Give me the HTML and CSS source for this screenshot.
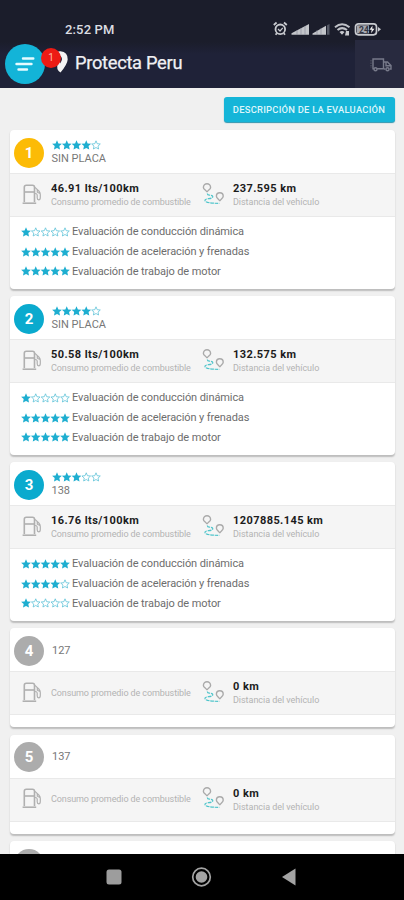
FILE: index.html
```html
<!DOCTYPE html>
<html lang="es">
<head>
<meta charset="utf-8">
<title>Protecta Peru</title>
<link rel="stylesheet" href="styles.css">
</head>
<body>
<svg class="defs" width="0" height="0">
  <symbol id="full" viewBox="0 0 10 10"><path fill="#1eaed0" d="M5 .2 6.4 3.4 9.9 3.8 7.3 6.1 8 9.6 5 7.9 2 9.6 2.7 6.1 .1 3.8 3.6 3.4Z"/></symbol>
  <symbol id="empty" viewBox="0 0 10 10"><path fill="none" stroke="#55bfd6" stroke-width=".75" d="M5 .8 6.2 3.7 9.3 4 7 6.1 7.6 9 5 7.5 2.4 9 3 6.1 .7 4 3.8 3.7Z"/></symbol>
  <symbol id="s1" viewBox="0 0 49 10"><use href="#full" width="10" height="10"/><use href="#empty" x="9.75" width="10" height="10"/><use href="#empty" x="19.5" width="10" height="10"/><use href="#empty" x="29.25" width="10" height="10"/><use href="#empty" x="39" width="10" height="10"/></symbol>
  <symbol id="s3" viewBox="0 0 49 10"><use href="#full" width="10" height="10"/><use href="#full" x="9.75" width="10" height="10"/><use href="#full" x="19.5" width="10" height="10"/><use href="#empty" x="29.25" width="10" height="10"/><use href="#empty" x="39" width="10" height="10"/></symbol>
  <symbol id="s4" viewBox="0 0 49 10"><use href="#full" width="10" height="10"/><use href="#full" x="9.75" width="10" height="10"/><use href="#full" x="19.5" width="10" height="10"/><use href="#full" x="29.25" width="10" height="10"/><use href="#empty" x="39" width="10" height="10"/></symbol>
  <symbol id="s5" viewBox="0 0 49 10"><use href="#full" width="10" height="10"/><use href="#full" x="9.75" width="10" height="10"/><use href="#full" x="19.5" width="10" height="10"/><use href="#full" x="29.25" width="10" height="10"/><use href="#full" x="39" width="10" height="10"/></symbol>
  <symbol id="fuel" viewBox="0 0 20 21"><g fill="none" stroke="#b0b0b0" stroke-width="1.6"><path d="M2.3 18V3.2Q2.3 1.2 4.3 1.2H10.5Q12.5 1.2 12.5 3.2V18"/><path d="M.6 19.2H14.2"/><path d="M3 8H12"/><path d="M13 3.4 17 7.2Q18.3 8.6 18.3 10.5V13.5Q18.3 15.8 16.7 15.8 15.2 15.8 15.2 13.8V11Q15.2 9.6 13 9.5M15.3 5.8V8.2L18 9.5" stroke-width="1.2"/></g></symbol>
  <symbol id="route" viewBox="0 0 22 22"><g fill="none" stroke="#aaa" stroke-width="1.4"><path d="M5 9.2C4.6 7.3 1.4 6.4 1.4 4.4A3.6 3.6 0 0 1 8.6 4.4C8.6 6.4 5.4 7.3 5 9.2Z"/><path d="M17.8 18.2C17.4 16.2 14.4 15.4 14.4 13.2A3.4 3.4 0 0 1 21.2 13.2C21.2 15.4 18.2 16.2 17.8 18.2Z"/></g><path d="M5.3 10.4Q5.3 12 7.5 12.2 11.2 12.5 10.7 14 10.3 15.3 6.5 15.7 2 16.3 3.2 18 5 20.3 17.4 20.4" fill="none" stroke="#50c5cb" stroke-width="1.2" stroke-dasharray="3.6 .8"/></symbol>
</svg>
<div class="screen">
  <header class="top">
    <div class="status">
      <span class="time">2:52 PM</span>
      <svg class="sys" width="110" height="16" viewBox="0 0 110 16">
        <g fill="none" stroke="#c9cbd0" stroke-width="1.8"><circle cx="7.3" cy="8.3" r="4.8"/><path d="M.8 4 3.6 1.5M11 1.5 13.8 4M3.8 12.3 2.6 13.8M10.8 12.3 12 13.8"/><path d="M5 8 7 10 9.8 6.8" stroke-width="1.2"/></g>
        <g fill="#c3c5ca"><path d="M18.5 13.8V12.3L36 3V13.8Z"/><path d="M39.5 13.8V12.5L53 4.8V13.8Z"/><path fill="#555966" d="M54 13.8V4.3L56.5 3V13.8Z"/></g>
        <path d="M24 9V14M28 7V14M32 5V14M44 9V14M48 7V14" stroke="#858893" stroke-width=".6"/>
        <g fill="none" stroke="#bfc1c7" stroke-width="2"><path d="M62 6.2Q69 .4 76.5 6.2M64.5 9Q69 5.3 74 9"/></g><path d="M66.5 11Q69 9 71.5 11L69 13.8ZM73 10H76V14.5H72Z" fill="#c9cbd0"/>
        <rect x="82.5" y="2.8" width="21" height="11" rx="3" fill="#1b1c2b" stroke="#c9cbd0" stroke-width="1.7"/><path d="M84 4.3H96V12.3H84Z" fill="#a6a8af"/><path d="M105 6 108 8.3 105 10.8Z" fill="#c9cbd0"/><text x="86" y="11.5" class="bat">24</text><path d="M99.5 4.5 96.5 8.7H98.7L98 12.2 101.5 7.8H99.3Z" fill="#eee"/>
      </svg>
    </div>
    <div class="bar">
      <div class="menu">
        <svg width="22" height="18" viewBox="0 0 22 18"><path d="M9 3.5H19.3M2.5 9H17.5M4.5 14.5H13" stroke="#e6fbff" stroke-width="2.4" stroke-linecap="round"/></svg>
        <span class="badge">1</span>
      </div>
      <svg class="pin" width="18" height="24" viewBox="0 0 18 24"><path d="M2 4Q5 1 9.5 1.2 17 2 16.7 9.5 16.3 14.5 9.500 22.500 4.500 19.500 7 13Z" fill="#f4f4f4"/><path d="M9 5.500Q13 8.500 9 13.500Z" fill="#1f2238"/></svg>
      <h1>Protecta Peru</h1>
      <div class="truck">
        <svg width="23" height="16" viewBox="0 0 23 16"><g fill="none" stroke="#777a8a" stroke-width="1.4"><path d="M4 11.800H3V2H13.500V11.800H7M14 5H17.500L21 8.600V12H19.500M14 12H15.500M16 5.500V8.700H20.500"/><circle cx="5.500" cy="12.200" r="1.500"/><circle cx="17.500" cy="12.200" r="1.500"/></g><path d="M1 3V11" stroke="#555868" stroke-dasharray="1.500 1"/></svg>
      </div>
    </div>
  </header>
  <main>
    <div class="action"><button>DESCRIPCIÓN DE LA EVALUACIÓN</button></div>
    <article class="card">
      <div class="head"><b class="rank gold">1</b><div><svg class="stars"><use href="#s4"/></svg><p>SIN PLACA</p></div></div>
      <div class="stats"><svg class="fuel"><use href="#fuel"/></svg><div class="stat"><strong>46.91 lts/100km</strong><small>Consumo promedio de combustible</small></div><svg class="route"><use href="#route"/></svg><div class="stat dist"><strong>237.595 km</strong><small>Distancia del vehículo</small></div></div>
      <ul>
        <li><svg class="stars"><use href="#s1"/></svg><span>Evaluación de conducción dinámica</span></li>
        <li><svg class="stars"><use href="#s5"/></svg><span>Evaluación de aceleración y frenadas</span></li>
        <li><svg class="stars"><use href="#s5"/></svg><span>Evaluación de trabajo de motor</span></li>
      </ul>
    </article>
    <article class="card">
      <div class="head"><b class="rank">2</b><div><svg class="stars"><use href="#s4"/></svg><p>SIN PLACA</p></div></div>
      <div class="stats"><svg class="fuel"><use href="#fuel"/></svg><div class="stat"><strong>50.58 lts/100km</strong><small>Consumo promedio de combustible</small></div><svg class="route"><use href="#route"/></svg><div class="stat dist"><strong>132.575 km</strong><small>Distancia del vehículo</small></div></div>
      <ul>
        <li><svg class="stars"><use href="#s1"/></svg><span>Evaluación de conducción dinámica</span></li>
        <li><svg class="stars"><use href="#s5"/></svg><span>Evaluación de aceleración y frenadas</span></li>
        <li><svg class="stars"><use href="#s5"/></svg><span>Evaluación de trabajo de motor</span></li>
      </ul>
    </article>
    <article class="card">
      <div class="head"><b class="rank">3</b><div><svg class="stars"><use href="#s3"/></svg><p>138</p></div></div>
      <div class="stats"><svg class="fuel"><use href="#fuel"/></svg><div class="stat"><strong>16.76 lts/100km</strong><small>Consumo promedio de combustible</small></div><svg class="route"><use href="#route"/></svg><div class="stat dist"><strong>1207885.145 km</strong><small>Distancia del vehículo</small></div></div>
      <ul>
        <li><svg class="stars"><use href="#s5"/></svg><span>Evaluación de conducción dinámica</span></li>
        <li><svg class="stars"><use href="#s4"/></svg><span>Evaluación de aceleración y frenadas</span></li>
        <li><svg class="stars"><use href="#s1"/></svg><span>Evaluación de trabajo de motor</span></li>
      </ul>
    </article>
    <article class="card short">
      <div class="head"><b class="rank gray">4</b><div><p>127</p></div></div>
      <div class="stats"><svg class="fuel"><use href="#fuel"/></svg><div class="stat"><small>Consumo promedio de combustible</small></div><svg class="route"><use href="#route"/></svg><div class="stat dist"><strong>0 km</strong><small>Distancia del vehículo</small></div></div>
    </article>
    <article class="card short">
      <div class="head"><b class="rank gray">5</b><div><p>137</p></div></div>
      <div class="stats"><svg class="fuel"><use href="#fuel"/></svg><div class="stat"><small>Consumo promedio de combustible</small></div><svg class="route"><use href="#route"/></svg><div class="stat dist"><strong>0 km</strong><small>Distancia del vehículo</small></div></div>
    </article>
    <article class="card short">
      <div class="head"><b class="rank gray"></b></div>
    </article>
  </main>
  <nav>
    <svg width="404" height="46" viewBox="0 0 404 46"><rect x="106.5" y="15.5" width="15" height="15" rx="2.5" fill="#9d9d9d"/><circle cx="201.5" cy="23" r="8.8" fill="none" stroke="#a3a3a3" stroke-width="1.7"/><circle cx="201.5" cy="23" r="5.8" fill="#a3a3a3"/><path d="M282 23 295.5 14.5V31.5Z" fill="#a3a3a3"/></svg>
  </nav>
</div>
</body>
</html>
```
FILE: styles.css
```css
* { box-sizing: border-box; }
body { margin: 0; font-family: Roboto, "Liberation Sans", sans-serif; background: #000; }
p, h1, ul { margin: 0; padding: 0; list-style: none; }
svg { display: block; flex: none; }
.defs { position: absolute; }
.screen { width: 404px; height: 900px; display: flex; flex-direction: column; overflow: hidden; }
.top { height: 88px; flex: none; background: linear-gradient(#1b1d2b 0, #1b1d2b 42px, #1f2238 54px, #1f2238 100%); }
.status { height: 40px; display: flex; justify-content: space-between; padding: 21px 21px 0 65px; }
.time { font-size: 13px; line-height: 17px; font-weight: 500; letter-spacing: .15px; color: #dcdde2; }
.bat { font-size: 8.5px; font-weight: 700; fill: #343744; }
.bar { height: 48px; display: flex; align-items: center; padding-left: 5px; }
.menu { width: 40px; height: 40px; border-radius: 50%; background: #13b4d8; display: flex; align-items: center; justify-content: center; position: relative; z-index: 1; margin-top: -1px; }
.badge { position: absolute; left: 36px; top: 4px; width: 20px; height: 20px; border-radius: 50%; background: #ed1b14; color: #ffb9a9; font-size: 10px; line-height: 20px; text-align: center; }
.pin { margin: -4px 0 0 6px; }
h1 { margin: -3px 0 0 6px; font-size: 18.3px; line-height: 24px; font-weight: 400; letter-spacing: -.3px; color: #f0f0f4; -webkit-text-stroke: .25px #f0f0f4; }
.truck { margin-left: auto; width: 49px; height: 48px; background: #282a3f; display: flex; align-items: center; padding: 2px 0 0 15px; }
main { flex: 1; min-height: 0; overflow: hidden; background: #f0f0f0; padding: 9px 9.5px 0 10px; display: flex; flex-direction: column; gap: 7.5px; }
.action { display: flex; justify-content: flex-end; height: 25.5px; flex: none; }
button { width: 171px; height: 25px; padding: 0; border: 0; border-radius: 3px; background: #15b5d8; color: #dff6fb; font: 500 9.4px/25px Roboto, sans-serif; letter-spacing: .24px; box-shadow: 0 1px 1px #2b94ae; white-space: nowrap; }
.card { flex: none; height: 158.5px; background: #fff; border-radius: 4px; box-shadow: 0 1.5px 1.5px #bdbdbd; }
.card.short { height: 99px; }
.head { height: 43px; display: flex; align-items: center; padding: 2px 0 0 4px; gap: 8px; }
.rank { width: 30px; height: 30px; border-radius: 50%; background: #0aaace; color: #fff; font-size: 15px; line-height: 30px; font-weight: 700; text-align: center; }
.gold { background: #fcbb06; }
.gray { background: #acacac; }
.head p { font-size: 11px; line-height: 14px; color: #777; }
.head .stars + p { margin: 2px 0 0 -.5px; }
.stars { width: 49px; height: 10px; }
.stats { height: 44px; background: #f5f5f5; border: solid #e9e9e9; border-width: 1px 0; display: flex; align-items: center; padding-left: 12px; }
.fuel { width: 20px; height: 21px; margin-top: -2px; }
.stat { width: 160px; padding-left: 9px; white-space: nowrap; }
.stat strong { display: block; font-size: 11px; line-height: 15px; font-weight: 700; letter-spacing: .42px; color: #1c1c1c; }
.stat small { display: block; font-size: 9px; line-height: 13px; letter-spacing: -.1px; color: #b3b3b3; }
.dist small { letter-spacing: -.04px; }
.route { width: 22px; height: 22px; margin-top: -3px; }
ul { padding: 5px 0 0 11px; }
li { display: flex; align-items: center; height: 19.7px; gap: 2px; font-size: 11px; letter-spacing: -.09px; color: #6d6d6d; white-space: nowrap; }
nav { height: 46px; flex: none; background: #000; }
```
